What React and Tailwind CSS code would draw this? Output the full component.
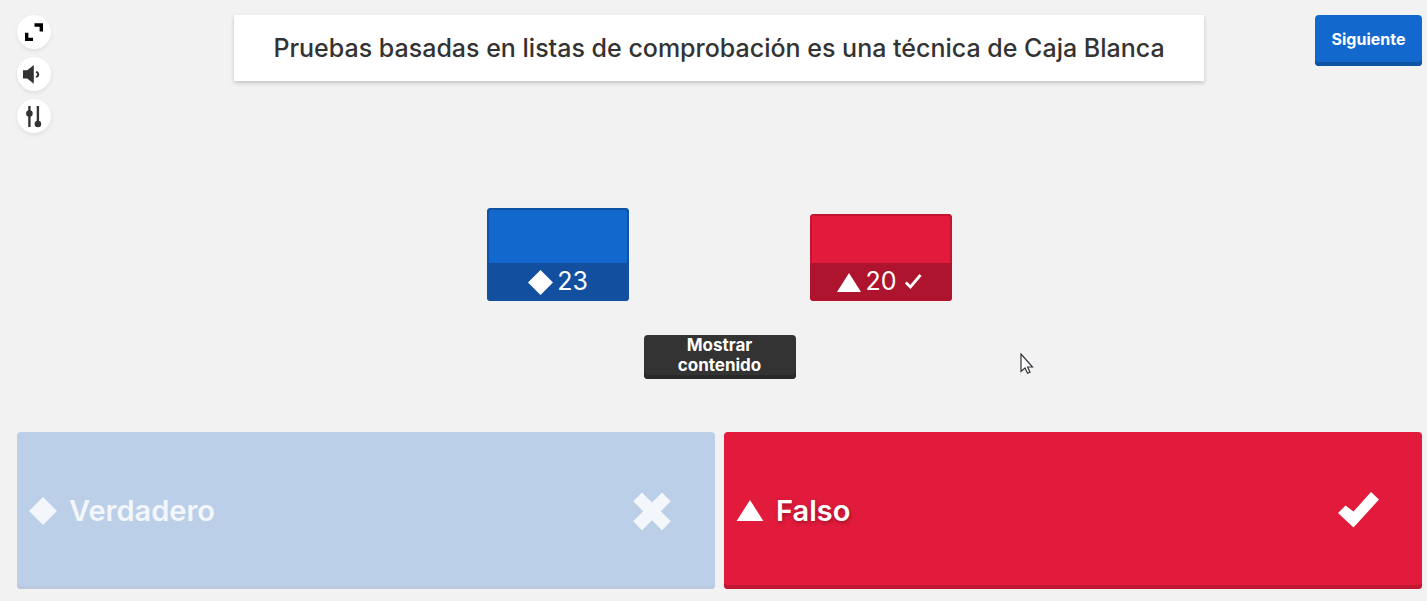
function Diamond({ className }) {
  return (
    <svg viewBox="0 0 28 28" className={className} fill="currentColor" aria-hidden="true">
      <path d="M14 0 28 14 14 28 0 14Z" />
    </svg>
  );
}

function Triangle({ className }) {
  return (
    <svg viewBox="0 0 28 22" className={className} fill="currentColor" aria-hidden="true">
      <path d="M14 0 28 22H0Z" />
    </svg>
  );
}

function ToolButton({ label, children }) {
  return (
    <button
      type="button"
      aria-label={label}
      className="flex size-[34px] items-center justify-center rounded-full bg-white text-[#333333] shadow-[0_2px_4px_rgba(0,0,0,0.08)]"
    >
      <svg viewBox="0 0 34 34" className="size-[34px]" fill="currentColor" aria-hidden="true">
        {children}
      </svg>
    </button>
  );
}

export default function App() {
  return (
    <div className="relative flex min-h-screen flex-col bg-[#f2f2f2] pt-[15px] pr-[5px] pb-3 pl-[17px] font-['Inter',sans-serif] text-[#333333]">
      <header className="grid grid-cols-[217px_1fr_218px] items-start">
        <div className="flex flex-col gap-2">
          <ToolButton label="Pantalla completa">
            <g fill="#000000">
              <path d="M17.5 8.3H26V16.5H22.6V11.7H17.5Z" />
              <path d="M8 17.7H11.4V22.7H16V26H8Z" />
            </g>
          </ToolButton>
          <ToolButton label="Volumen">
            <path d="M6 13.2H10.2L16.8 8V26.8L10.2 21.6H6Z" />
            <path d="M19.2 14.6Q23.4 17.4 19.2 20.2" fill="none" stroke="currentColor" strokeWidth="2" />
          </ToolButton>
          <ToolButton label="Ajustes">
            <path d="M11.2 7H13.6V28H11.2Z" />
            <circle cx="12.4" cy="14.5" r="3.3" />
            <path d="M19.7 7H22.1V26H19.7Z" />
            <circle cx="20.9" cy="25" r="3.3" />
          </ToolButton>
        </div>
        <h1 className="bg-white px-6 py-4 text-center text-[25px] leading-[34px] font-medium shadow-[0_2px_4px_rgba(0,0,0,0.2)]">
          Pruebas basadas en listas de comprobación es una técnica de Caja Blanca
        </h1>
        <button
          type="button"
          className="h-[51px] w-[107px] justify-self-end rounded bg-[#1368ce] pb-1 text-base font-bold text-white shadow-[inset_0_-4px_0_#0f53a5]"
        >
          Siguiente
        </button>
      </header>

      <main className="flex flex-1 flex-col">
        <section aria-label="Resultados" className="flex flex-1 items-end justify-center gap-[181px]">
          <div className="flex h-[93px] w-[142px] flex-col justify-end overflow-hidden rounded bg-[#1368ce] shadow-[inset_0_0_0_2px_#0f53a5]">
            <div className="flex h-[38px] items-center justify-center gap-1 bg-[#12509f] text-[25px] text-white">
              <Diamond className="size-[25px]" />
              <span>23</span>
            </div>
          </div>
          <div className="flex h-[87px] w-[142px] flex-col justify-end overflow-hidden rounded bg-[#e21b3c] shadow-[inset_0_0_0_2px_#c4142f]">
            <div className="flex h-[38px] items-center justify-center gap-1 bg-[#af142e] text-[25px] text-white">
              <Triangle className="h-[19px] w-6" />
              <span>20</span>
              <svg viewBox="0 0 24 24" className="size-6" fill="none" stroke="currentColor" strokeWidth="2.8" role="img" aria-label="Correcta">
                <path d="M4.8 12.5 9.4 17 19.5 5" />
              </svg>
            </div>
          </div>
        </section>
        <button
          type="button"
          className="mt-[34px] h-11 w-[152px] self-center rounded bg-[#333333] px-6 pb-1 text-[17px] leading-5 font-bold text-white shadow-[inset_0_-4px_0_#292929]"
        >
          Mostrar contenido
        </button>
        <section aria-label="Respuestas" className="mt-[53px] grid grid-cols-2 gap-[9px] text-[29px] leading-9 font-semibold">
          <button
            type="button"
            className="flex h-[157px] items-center rounded bg-[#bccfe8] pr-[43px] pl-3 text-left text-[#f3f6fb] shadow-[inset_0_-3px_0_#bac8e0]"
          >
            <Diamond className="size-7" />
            <span className="ml-3 flex-1">Verdadero</span>
            <svg viewBox="0 0 40 40" className="size-10" fill="currentColor" role="img" aria-label="Incorrecta">
              <path d="M10 1.5 20 11.5 30 1.5 38.8 10.3 28.8 20.3 38.8 30.3 30 39.2 20 29.2 10 39.2 1.2 30.3 11.2 20.3 1.2 10.3Z" />
            </svg>
          </button>
          <button
            type="button"
            className="flex h-[157px] items-center rounded bg-[#e21b3c] pr-[43px] pl-3 text-left text-white shadow-[inset_0_-4px_0_#c01733]"
          >
            <Triangle className="h-[21px] w-7" />
            <span className="ml-3 flex-1 [text-shadow:1px_2px_4px_rgba(0,0,0,0.3)]">Falso</span>
            <svg viewBox="0 0 42 40" className="h-10 w-[42px]" fill="currentColor" role="img" aria-label="Correcta">
              <path d="M1 22 8.5 14.5 16.5 20.5 34 1 42 8.5 16.5 36.5Z" />
            </svg>
          </button>
        </section>
      </main>

      <svg viewBox="0 0 14 22" className="pointer-events-none absolute top-[353px] left-[1020px] h-[22px] w-3.5" aria-hidden="true">
        <path d="M1 1V18.5L5 15 7.6 20.2 10 19.2 7.6 14H12.5Z" fill="#ffffff" stroke="#33333d" strokeWidth="1.2" />
      </svg>
    </div>
  );
}
